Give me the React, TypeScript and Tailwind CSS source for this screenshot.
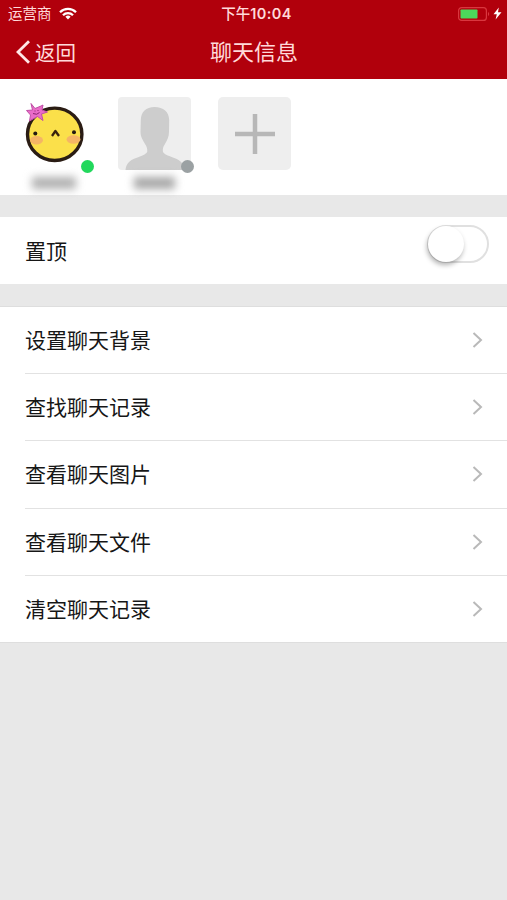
const menuItems = ["设置聊天背景", "查找聊天记录", "查看聊天图片", "查看聊天文件", "清空聊天记录"];

function StatusBar() {
  return (
    <div className="relative flex h-[27px] items-center justify-between pl-2 pr-[5px] text-[14.5px] leading-none text-[#ffdada]">
      <div className="flex items-center gap-[7px]">
        <span>运营商</span>
        <svg width="18" height="13" viewBox="0 0 18 13" fill="none" stroke="#fff" strokeWidth="2.3">
          <path d="M1 5.2a11.3 11.3 0 0 1 16 0" />
          <path d="M4 8.2a7 7 0 0 1 10 0" />
          <path d="M9 12.5 6.4 9.8a3.7 3.7 0 0 1 5.2 0z" fill="#fff" stroke="none" />
        </svg>
      </div>
      <div className="absolute inset-x-0 pl-[6px] text-center font-medium">
        下午<span className="font-['Inter'] text-[14.5px] font-semibold tracking-[0.4px]">10:04</span>
      </div>
      <div className="flex items-center">
        <svg width="32" height="14" viewBox="0 0 32 14">
          <rect x="0.6" y="0.6" width="27.8" height="12.8" rx="3" fill="none" stroke="#d9373f" strokeWidth="1.2" />
          <rect x="2.5" y="2.5" width="17" height="9" rx="0.8" fill="#4cd95b" />
          <path d="M30 5v4c1.6-.5 1.6-3.5 0-4z" fill="#d9373f" />
        </svg>
        <svg className="ml-[3px]" width="9" height="13" viewBox="0 0 9 13">
          <path d="M5.8 0.5 0.5 7.3h3.3L2.6 12.5 8.5 5.3H5z" fill="#fff" />
        </svg>
      </div>
    </div>
  );
}

function NavBar() {
  return (
    <div className="relative flex h-[52px] items-start px-4 text-[#ffdada]">
      <button className="mt-3 flex h-[26px] items-center">
        <svg width="15" height="24" viewBox="0 0 15 24" fill="none" stroke="#ffe6e6" strokeWidth="2.8">
          <path d="M13 1.2 2 12l11 10.8" />
        </svg>
        <span className="ml-1 text-[20.5px] leading-none">返回</span>
      </button>
      <h1 className="absolute inset-x-0 top-[10px] pl-px text-center text-[22px] leading-[26px]">聊天信息</h1>
    </div>
  );
}

function ChickAvatar() {
  return (
    <svg width="73" height="73" viewBox="0 0 73 73">
      <ellipse cx="36.7" cy="37.3" rx="27.2" ry="26.2" fill="#fbe04a" stroke="#2a1c14" strokeWidth="3.4" />
      <ellipse cx="18.5" cy="43.3" rx="6.5" ry="4.2" fill="#f5b565" />
      <ellipse cx="55.5" cy="42.5" rx="7" ry="4.2" fill="#f5b565" />
      <circle cx="17.3" cy="36.5" r="2" fill="#241a12" />
      <circle cx="56" cy="35.3" r="2" fill="#241a12" />
      <path d="m34 39 3.4-5 3.6 5" fill="none" stroke="#3a220d" strokeWidth="2.3" strokeLinejoin="round" />
      <path
        d="M13 6.500l4 5 6-2.500 2-1-1 5 5.500 2-6 2 1.500 6.500-5.500-4-8 4.500 1-6-4-4.500 6-.500z"
        fill="#ea6bc8"
        stroke="#c04fa6"
        strokeWidth="1"
        strokeLinejoin="round"
      />
      <path d="M15 16.500q4 2 6.500-1M17 13.500v1M20 13v1" fill="none" stroke="#8b236f" strokeWidth="1" />
    </svg>
  );
}

function PersonAvatar() {
  return (
    <svg className="rounded-[4px] bg-[#eeeeee]" width="73" height="73" viewBox="0 0 73 73">
      <path
        d="M36.500 10C28 10 23 15 22.800 23L22.500 35C22.500 40 25 43 27 47C29 50 29.500 52 29.200 55C28 57 25.500 58 22 59.500C13 62.500 8 65.500 7.500 73H67C66 65.500 61 62.500 52.500 59.500C48.500 58 46 57 45 55C44.500 52 45 50 47 47C49 43 51 40 51 35L51.200 23C51 15 45.500 10 36.500 10Z"
        fill="#cdcdcd"
      />
    </svg>
  );
}

function Members() {
  return (
    <section className="flex h-[116px] gap-[27px] bg-white pl-[18px] pt-[18px]">
      <div className="relative w-[73px]">
        <ChickAvatar />
        <span className="absolute left-[63px] top-[63px] size-[13px] rounded-full bg-[#22d85c]" />
        <div className="ml-[14px] mt-[7px] h-3 w-[44px] bg-[#b0b0b0] blur-[4px]" />
      </div>
      <div className="relative w-[73px]">
        <PersonAvatar />
        <span className="absolute left-[63px] top-[63px] size-[13px] rounded-full bg-[#9ba1a3]" />
        <div className="ml-[16px] mt-[7px] h-3 w-[41px] bg-[#a6a6a6] blur-[4px]" />
      </div>
      <button className="flex size-[73px] items-center justify-center rounded-[5px] bg-[#eeeeee]">
        <svg width="40" height="40" viewBox="0 0 40 40" stroke="#b7b7b7" strokeWidth="4.5">
          <path d="M20 0v40M0 20h40" />
        </svg>
      </button>
    </section>
  );
}

export default function App() {
  return (
    <main className="h-[900px] w-[507px] overflow-hidden bg-[#e8e8e8] font-['Noto_Sans_CJK_SC','Liberation_Sans',sans-serif] text-[#161616]">
      <header className="h-[79px] bg-[#b1000c]">
        <StatusBar />
        <NavBar />
      </header>
      <Members />
      <section className="mt-[22px] flex h-[67px] items-start justify-between bg-white pl-[25px] pr-[18px]">
        <span className="pt-[18px] text-[21px] leading-[30px]">置顶</span>
        <button className="mt-2 h-[38px] w-[62px] rounded-full border-2 border-[#e0e0e0] bg-white">
          <span className="-ml-px -mt-px block size-[36px] rounded-full bg-white shadow-[-1px_3px_5px_rgba(0,0,0,0.3)]" />
        </button>
      </section>
      <ul className="mt-[22px] border-y border-[#dedede] bg-white">
        {menuItems.map((item) => (
          <li key={item} className="group pl-[25px]">
            <div className="flex h-[67.2px] items-center justify-between border-b border-[#e2e2e2] pr-6 group-last:h-[66px] group-last:border-b-0">
              <span className="pb-[2px] text-[21px] leading-[30px]">{item}</span>
              <svg width="11" height="16" viewBox="0 0 11 16" fill="none" stroke="#b9b9b9" strokeWidth="2">
                <path d="M1.5 1 9 8l-7.5 7" />
              </svg>
            </div>
          </li>
        ))}
      </ul>
    </main>
  );
}
